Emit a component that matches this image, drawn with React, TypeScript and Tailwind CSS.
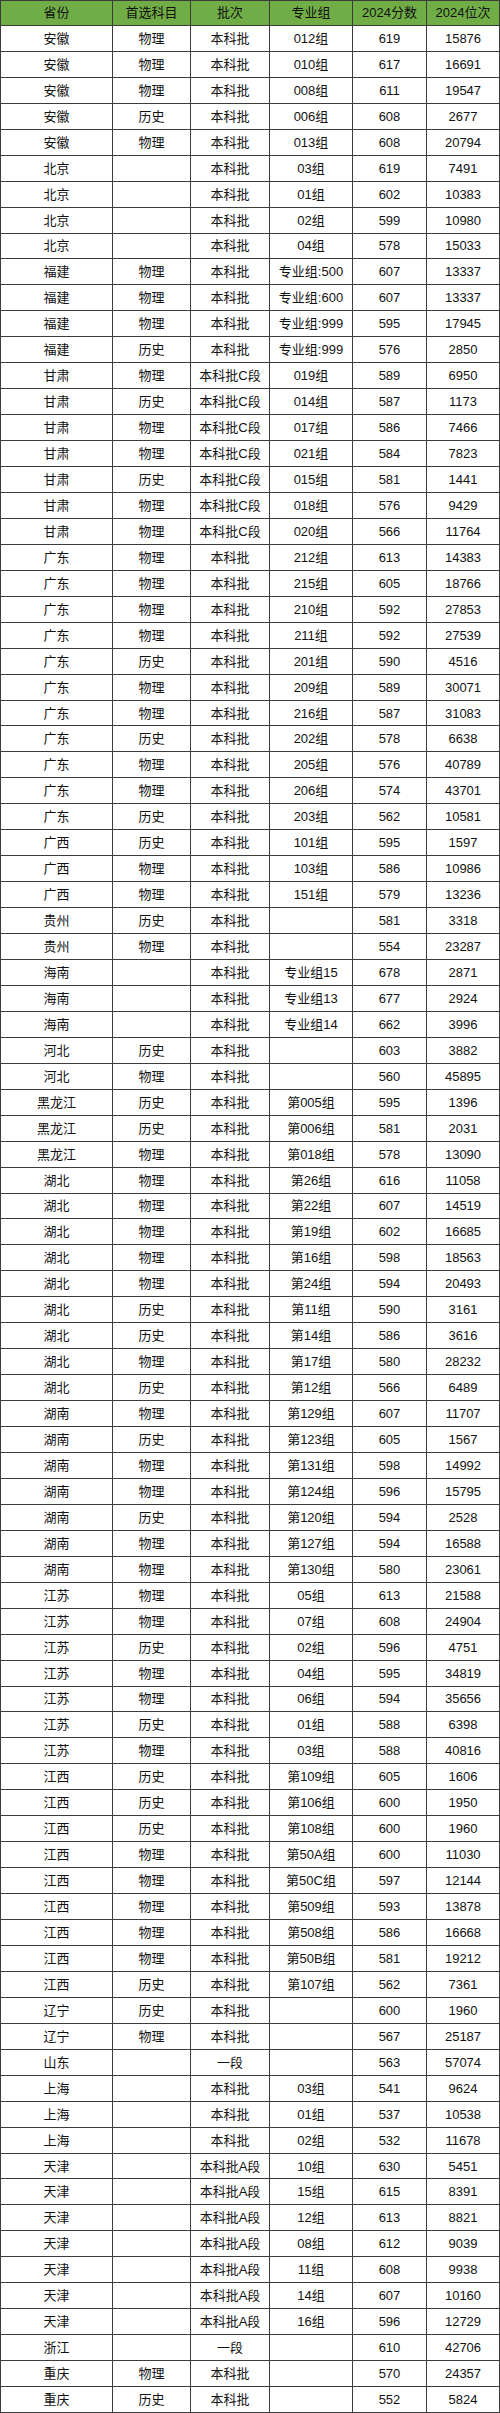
const header = ["省份", "首选科目", "批次", "专业组", "2024分数", "2024位次"];

const rows: string[][] = [
  ["安徽", "物理", "本科批", "012组", "619", "15876"],
  ["安徽", "物理", "本科批", "010组", "617", "16691"],
  ["安徽", "物理", "本科批", "008组", "611", "19547"],
  ["安徽", "历史", "本科批", "006组", "608", "2677"],
  ["安徽", "物理", "本科批", "013组", "608", "20794"],
  ["北京", "", "本科批", "03组", "619", "7491"],
  ["北京", "", "本科批", "01组", "602", "10383"],
  ["北京", "", "本科批", "02组", "599", "10980"],
  ["北京", "", "本科批", "04组", "578", "15033"],
  ["福建", "物理", "本科批", "专业组:500", "607", "13337"],
  ["福建", "物理", "本科批", "专业组:600", "607", "13337"],
  ["福建", "物理", "本科批", "专业组:999", "595", "17945"],
  ["福建", "历史", "本科批", "专业组:999", "576", "2850"],
  ["甘肃", "物理", "本科批C段", "019组", "589", "6950"],
  ["甘肃", "历史", "本科批C段", "014组", "587", "1173"],
  ["甘肃", "物理", "本科批C段", "017组", "586", "7466"],
  ["甘肃", "物理", "本科批C段", "021组", "584", "7823"],
  ["甘肃", "历史", "本科批C段", "015组", "581", "1441"],
  ["甘肃", "物理", "本科批C段", "018组", "576", "9429"],
  ["甘肃", "物理", "本科批C段", "020组", "566", "11764"],
  ["广东", "物理", "本科批", "212组", "613", "14383"],
  ["广东", "物理", "本科批", "215组", "605", "18766"],
  ["广东", "物理", "本科批", "210组", "592", "27853"],
  ["广东", "物理", "本科批", "211组", "592", "27539"],
  ["广东", "历史", "本科批", "201组", "590", "4516"],
  ["广东", "物理", "本科批", "209组", "589", "30071"],
  ["广东", "物理", "本科批", "216组", "587", "31083"],
  ["广东", "历史", "本科批", "202组", "578", "6638"],
  ["广东", "物理", "本科批", "205组", "576", "40789"],
  ["广东", "物理", "本科批", "206组", "574", "43701"],
  ["广东", "历史", "本科批", "203组", "562", "10581"],
  ["广西", "历史", "本科批", "101组", "595", "1597"],
  ["广西", "物理", "本科批", "103组", "586", "10986"],
  ["广西", "物理", "本科批", "151组", "579", "13236"],
  ["贵州", "历史", "本科批", "", "581", "3318"],
  ["贵州", "物理", "本科批", "", "554", "23287"],
  ["海南", "", "本科批", "专业组15", "678", "2871"],
  ["海南", "", "本科批", "专业组13", "677", "2924"],
  ["海南", "", "本科批", "专业组14", "662", "3996"],
  ["河北", "历史", "本科批", "", "603", "3882"],
  ["河北", "物理", "本科批", "", "560", "45895"],
  ["黑龙江", "历史", "本科批", "第005组", "595", "1396"],
  ["黑龙江", "历史", "本科批", "第006组", "581", "2031"],
  ["黑龙江", "物理", "本科批", "第018组", "578", "13090"],
  ["湖北", "物理", "本科批", "第26组", "616", "11058"],
  ["湖北", "物理", "本科批", "第22组", "607", "14519"],
  ["湖北", "物理", "本科批", "第19组", "602", "16685"],
  ["湖北", "物理", "本科批", "第16组", "598", "18563"],
  ["湖北", "物理", "本科批", "第24组", "594", "20493"],
  ["湖北", "历史", "本科批", "第11组", "590", "3161"],
  ["湖北", "历史", "本科批", "第14组", "586", "3616"],
  ["湖北", "物理", "本科批", "第17组", "580", "28232"],
  ["湖北", "历史", "本科批", "第12组", "566", "6489"],
  ["湖南", "物理", "本科批", "第129组", "607", "11707"],
  ["湖南", "历史", "本科批", "第123组", "605", "1567"],
  ["湖南", "物理", "本科批", "第131组", "598", "14992"],
  ["湖南", "物理", "本科批", "第124组", "596", "15795"],
  ["湖南", "历史", "本科批", "第120组", "594", "2528"],
  ["湖南", "物理", "本科批", "第127组", "594", "16588"],
  ["湖南", "物理", "本科批", "第130组", "580", "23061"],
  ["江苏", "物理", "本科批", "05组", "613", "21588"],
  ["江苏", "物理", "本科批", "07组", "608", "24904"],
  ["江苏", "历史", "本科批", "02组", "596", "4751"],
  ["江苏", "物理", "本科批", "04组", "595", "34819"],
  ["江苏", "物理", "本科批", "06组", "594", "35656"],
  ["江苏", "历史", "本科批", "01组", "588", "6398"],
  ["江苏", "物理", "本科批", "03组", "588", "40816"],
  ["江西", "历史", "本科批", "第109组", "605", "1606"],
  ["江西", "历史", "本科批", "第106组", "600", "1950"],
  ["江西", "历史", "本科批", "第108组", "600", "1960"],
  ["江西", "物理", "本科批", "第50A组", "600", "11030"],
  ["江西", "物理", "本科批", "第50C组", "597", "12144"],
  ["江西", "物理", "本科批", "第509组", "593", "13878"],
  ["江西", "物理", "本科批", "第508组", "586", "16668"],
  ["江西", "物理", "本科批", "第50B组", "581", "19212"],
  ["江西", "历史", "本科批", "第107组", "562", "7361"],
  ["辽宁", "历史", "本科批", "", "600", "1960"],
  ["辽宁", "物理", "本科批", "", "567", "25187"],
  ["山东", "", "一段", "", "563", "57074"],
  ["上海", "", "本科批", "03组", "541", "9624"],
  ["上海", "", "本科批", "01组", "537", "10538"],
  ["上海", "", "本科批", "02组", "532", "11678"],
  ["天津", "", "本科批A段", "10组", "630", "5451"],
  ["天津", "", "本科批A段", "15组", "615", "8391"],
  ["天津", "", "本科批A段", "12组", "613", "8821"],
  ["天津", "", "本科批A段", "08组", "612", "9039"],
  ["天津", "", "本科批A段", "11组", "608", "9938"],
  ["天津", "", "本科批A段", "14组", "607", "10160"],
  ["天津", "", "本科批A段", "16组", "596", "12729"],
  ["浙江", "", "一段", "", "610", "42706"],
  ["重庆", "物理", "本科批", "", "570", "24357"],
  ["重庆", "历史", "本科批", "", "552", "5824"]
];

function Cell({ text, first, head }: { text: string; first: boolean; head?: boolean }) {
  return (
    <div
      className={
        "flex items-center justify-center border-b border-r border-[#3c3c3c] text-[13px] leading-none text-[#111] " +
        (first ? "border-l " : "") +
        (head ? "border-t bg-[#70ad47]" : "bg-white")
      }
    >
      {text}
    </div>
  );
}

export default function App() {
  return (
    <div
      className="grid h-[2413px] w-[500px] grid-cols-[113px_78px_79px_83px_74px_73px] grid-rows-[repeat(93,minmax(0,1fr))] bg-white"
      style={{ fontFamily: '"Liberation Sans", "Noto Sans CJK SC", sans-serif' }}
    >
      {header.map((h, i) => (
        <Cell key={"h" + i} text={h} first={i === 0} head />
      ))}
      {rows.map((row, r) =>
        row.map((c, i) => <Cell key={r + "-" + i} text={c} first={i === 0} />)
      )}
    </div>
  );
}
